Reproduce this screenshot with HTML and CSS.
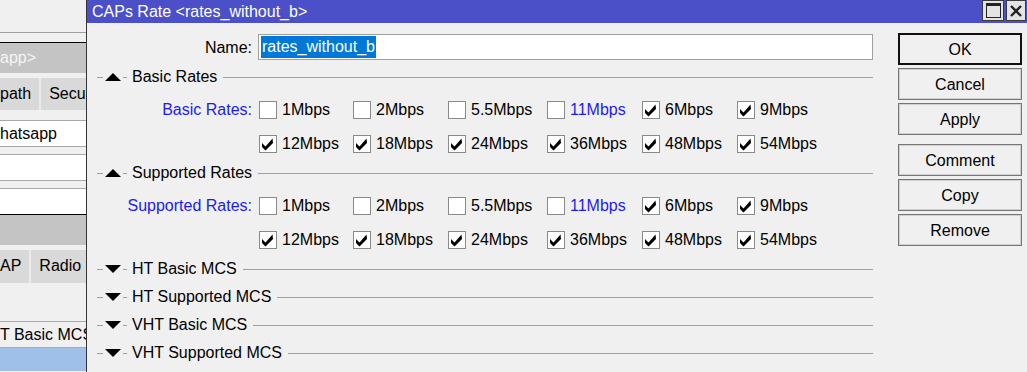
FILE: index.html
```html
<!DOCTYPE html>
<html lang="en">
<head>
    <meta charset="UTF-8">
    <title>CAPs Rate</title>
    <link rel="stylesheet" href="styles.css">
</head>
<body>
    <div class="desk">
        <div class="backwin">
            <div class="bw-top"></div>
            <div class="bw-frame first">
                <div class="bw-caption">app&gt;</div>
                <div class="bw-tabs">
                    <span class="bw-tab lead">path</span>
                    <span class="bw-tab">Secur</span>
                </div>
                <div class="bw-field first">hatsapp</div>
                <div class="bw-field"></div>
                <div class="bw-field last"></div>
            </div>
            <div class="bw-frame">
                <div class="bw-caption"></div>
                <div class="bw-tabs tall">
                    <span class="bw-tab lead">AP</span>
                    <span class="bw-tab">Radio</span>
                    <span class="bw-tab"></span>
                </div>
                <div class="bw-row">T Basic MCS</div>
                <div class="bw-row selected"></div>
            </div>
        </div>

        <div class="dialog">
            <div class="titlebar">
                <span class="title">CAPs Rate &lt;rates_without_b&gt;</span>
                <span class="tb-btn max">
                    <svg width="15" height="15" viewBox="0 0 15 15"><rect x="0.5" y="0.5" width="14" height="14" fill="none" stroke="#222"/><rect x="0" y="0" width="15" height="3" fill="#222"/></svg>
                </span>
                <span class="tb-btn close">
                    <svg width="12" height="12" viewBox="0 0 12 12"><path d="M1 1L11 11M11 1L1 11" stroke="#222" stroke-width="2.4"/></svg>
                </span>
            </div>

            <div class="dlg-body">
                <div class="form">
                    <div class="name-row">
                        <label class="lbl" for="name">Name:</label>
                        <div class="input" id="name"><span class="sel">rates_without_b</span></div>
                    </div>

                    <div class="group top">
                        <span class="dash"></span>
                        <svg class="tri" width="16" height="8" viewBox="0 0 16 8"><polygon points="0,8 8,0 16,8" fill="#000"/></svg>
                        <span class="dash short"></span>
                        <span class="group-title">Basic Rates</span>
                        <span class="rule"></span>
                    </div>
                    <div class="rates">
                        <div class="lbl blue">Basic Rates:</div>
                        <div class="checks">
                            <span class="cb"><span class="box"></span>1Mbps</span>
                            <span class="cb"><span class="box"></span>2Mbps</span>
                            <span class="cb"><span class="box"></span>5.5Mbps</span>
                            <span class="cb blue"><span class="box"></span>11Mbps</span>
                            <span class="cb"><span class="box"><svg viewBox="0 0 18 18"><polygon points="3,8 6.5,11.5 13.5,3.5 14,8 6.5,15.5 3,12"/></svg></span>6Mbps</span>
                            <span class="cb"><span class="box"><svg viewBox="0 0 18 18"><polygon points="3,8 6.5,11.5 13.5,3.5 14,8 6.5,15.5 3,12"/></svg></span>9Mbps</span>
                            <span class="cb"><span class="box"><svg viewBox="0 0 18 18"><polygon points="3,8 6.5,11.5 13.5,3.5 14,8 6.5,15.5 3,12"/></svg></span>12Mbps</span>
                            <span class="cb"><span class="box"><svg viewBox="0 0 18 18"><polygon points="3,8 6.5,11.5 13.5,3.5 14,8 6.5,15.5 3,12"/></svg></span>18Mbps</span>
                            <span class="cb"><span class="box"><svg viewBox="0 0 18 18"><polygon points="3,8 6.5,11.5 13.5,3.5 14,8 6.5,15.5 3,12"/></svg></span>24Mbps</span>
                            <span class="cb"><span class="box"><svg viewBox="0 0 18 18"><polygon points="3,8 6.5,11.5 13.5,3.5 14,8 6.5,15.5 3,12"/></svg></span>36Mbps</span>
                            <span class="cb"><span class="box"><svg viewBox="0 0 18 18"><polygon points="3,8 6.5,11.5 13.5,3.5 14,8 6.5,15.5 3,12"/></svg></span>48Mbps</span>
                            <span class="cb"><span class="box"><svg viewBox="0 0 18 18"><polygon points="3,8 6.5,11.5 13.5,3.5 14,8 6.5,15.5 3,12"/></svg></span>54Mbps</span>
                        </div>
                    </div>

                    <div class="group">
                        <span class="dash"></span>
                        <svg class="tri" width="16" height="8" viewBox="0 0 16 8"><polygon points="0,8 8,0 16,8" fill="#000"/></svg>
                        <span class="dash short"></span>
                        <span class="group-title">Supported Rates</span>
                        <span class="rule"></span>
                    </div>
                    <div class="rates">
                        <div class="lbl blue">Supported Rates:</div>
                        <div class="checks">
                            <span class="cb"><span class="box"></span>1Mbps</span>
                            <span class="cb"><span class="box"></span>2Mbps</span>
                            <span class="cb"><span class="box"></span>5.5Mbps</span>
                            <span class="cb blue"><span class="box"></span>11Mbps</span>
                            <span class="cb"><span class="box"><svg viewBox="0 0 18 18"><polygon points="3,8 6.5,11.5 13.5,3.5 14,8 6.5,15.5 3,12"/></svg></span>6Mbps</span>
                            <span class="cb"><span class="box"><svg viewBox="0 0 18 18"><polygon points="3,8 6.5,11.5 13.5,3.5 14,8 6.5,15.5 3,12"/></svg></span>9Mbps</span>
                            <span class="cb"><span class="box"><svg viewBox="0 0 18 18"><polygon points="3,8 6.5,11.5 13.5,3.5 14,8 6.5,15.5 3,12"/></svg></span>12Mbps</span>
                            <span class="cb"><span class="box"><svg viewBox="0 0 18 18"><polygon points="3,8 6.5,11.5 13.5,3.5 14,8 6.5,15.5 3,12"/></svg></span>18Mbps</span>
                            <span class="cb"><span class="box"><svg viewBox="0 0 18 18"><polygon points="3,8 6.5,11.5 13.5,3.5 14,8 6.5,15.5 3,12"/></svg></span>24Mbps</span>
                            <span class="cb"><span class="box"><svg viewBox="0 0 18 18"><polygon points="3,8 6.5,11.5 13.5,3.5 14,8 6.5,15.5 3,12"/></svg></span>36Mbps</span>
                            <span class="cb"><span class="box"><svg viewBox="0 0 18 18"><polygon points="3,8 6.5,11.5 13.5,3.5 14,8 6.5,15.5 3,12"/></svg></span>48Mbps</span>
                            <span class="cb"><span class="box"><svg viewBox="0 0 18 18"><polygon points="3,8 6.5,11.5 13.5,3.5 14,8 6.5,15.5 3,12"/></svg></span>54Mbps</span>
                        </div>
                    </div>

                    <div class="group">
                        <span class="dash"></span>
                        <svg class="tri" width="16" height="8" viewBox="0 0 16 8"><polygon points="0,0 16,0 8,8" fill="#000"/></svg>
                        <span class="dash short"></span>
                        <span class="group-title">HT Basic MCS</span>
                        <span class="rule"></span>
                    </div>
                    <div class="group">
                        <span class="dash"></span>
                        <svg class="tri" width="16" height="8" viewBox="0 0 16 8"><polygon points="0,0 16,0 8,8" fill="#000"/></svg>
                        <span class="dash short"></span>
                        <span class="group-title">HT Supported MCS</span>
                        <span class="rule"></span>
                    </div>
                    <div class="group">
                        <span class="dash"></span>
                        <svg class="tri" width="16" height="8" viewBox="0 0 16 8"><polygon points="0,0 16,0 8,8" fill="#000"/></svg>
                        <span class="dash short"></span>
                        <span class="group-title">VHT Basic MCS</span>
                        <span class="rule"></span>
                    </div>
                    <div class="group">
                        <span class="dash"></span>
                        <svg class="tri" width="16" height="8" viewBox="0 0 16 8"><polygon points="0,0 16,0 8,8" fill="#000"/></svg>
                        <span class="dash short"></span>
                        <span class="group-title">VHT Supported MCS</span>
                        <span class="rule"></span>
                    </div>
                </div>

                <div class="buttons">
                    <button class="btn default">OK</button>
                    <button class="btn">Cancel</button>
                    <button class="btn">Apply</button>
                    <button class="btn spaced">Comment</button>
                    <button class="btn">Copy</button>
                    <button class="btn">Remove</button>
                </div>
            </div>
        </div>
    </div>
</body>
</html>
```

FILE: styles.css
```css
* {
    box-sizing: border-box;
}

body {
    margin: 0;
    font-family: "Liberation Sans", Arial, sans-serif;
    font-size: 16px;
    color: #000;
    background-color: #f0f0f0;
}

.desk {
    display: flex;
    width: 1027px;
    height: 372px;
    overflow: hidden;
}

/* window behind the dialog */
.backwin {
    width: 86px;
    flex: none;
    overflow: hidden;
    white-space: nowrap;
    background-color: #f0f0f0;
}

.bw-top {
    height: 33px;
    border-bottom: 1px solid #a0a0a0;
}

.bw-frame {
    border-top: 1px solid #000;
}

.bw-frame.first {
    margin-top: 9px;
}

.bw-caption {
    height: 30px;
    line-height: 30px;
    background-color: #c4c4c4;
    color: #f4f4f4;
}

.bw-tabs {
    display: flex;
    height: 32px;
    margin-top: 5px;
    background-color: #d9d9d9;
}

.bw-tabs.tall {
    height: 33px;
}

.bw-tab {
    padding: 0 8px;
    line-height: 32px;
    border-right: 2px solid #ebebeb;
}

.bw-tab.lead {
    padding-left: 0;
}

.bw-field {
    height: 27px;
    margin-top: 7px;
    line-height: 25px;
    background-color: #fff;
    border-top: 1px solid #a9a9a9;
    border-bottom: 1px solid #a9a9a9;
}

.bw-field.first {
    margin-top: 10px;
}

.bw-field.last {
    height: 26px;
    border-bottom: none;
}

.bw-row {
    height: 27px;
    margin-top: 38px;
    line-height: 25px;
    border-top: 1px solid #a9a9a9;
    border-bottom: 1px solid #a9a9a9;
}

.bw-row.selected {
    height: 23px;
    margin-top: 0;
    border: none;
    background-color: #9fc0e8;
}

/* dialog */
.dialog {
    width: 941px;
    flex: none;
    border-left: 1px solid #333;
    background-color: #f0f0f0;
}

.titlebar {
    display: flex;
    align-items: flex-start;
    height: 23px;
    background-color: #4b50c9;
    color: #fff;
}

.title {
    padding-left: 5px;
    line-height: 23px;
}

.tb-btn {
    display: flex;
    justify-content: center;
    align-items: center;
    height: 21px;
    background-color: #e3e3e3;
    border: 1px solid #3a3a3a;
}

.tb-btn.max {
    width: 22px;
    margin-left: auto;
}

.tb-btn.close {
    width: 20px;
    margin-left: 2px;
    margin-right: 1px;
}

.dlg-body {
    display: flex;
}

.form {
    width: 786px;
    padding-top: 11px;
}

.name-row {
    display: flex;
    align-items: center;
    height: 26px;
    padding-top: 1px;
}

.lbl {
    width: 165px;
    margin-right: 6px;
    text-align: right;
    flex: none;
}

.blue {
    color: #1c1cf2;
}

.input {
    flex: 1;
    height: 26px;
    margin-top: -1px;
    padding: 1px 2px;
    background-color: #fff;
    border: 1px solid #a0a0a0;
}

.sel {
    display: inline-block;
    height: 22px;
    line-height: 22px;
    padding: 0 1px;
    background-color: #0078d7;
    color: #fff;
}

.group {
    display: flex;
    align-items: center;
    height: 28px;
    padding-left: 10px;
}

.group.top {
    margin-top: 3px;
}

.dash {
    width: 6px;
    height: 1px;
    background-color: #a0a0a0;
    margin-right: 1px;
}

.dash.short {
    width: 4px;
    margin-left: 2px;
    margin-right: 5px;
}

.tri {
    flex: none;
    margin-left: 1px;
}

.group-title {
    margin-right: 6px;
}

.rule {
    flex: 1;
    height: 1px;
    background-color: #a0a0a0;
}

.rates {
    display: flex;
}

.rates .lbl {
    height: 34px;
    line-height: 34px;
    padding-top: 2px;
}

.checks {
    display: grid;
    grid-template-columns: 94px 95px 99px 95px 95px auto;
    grid-auto-rows: 34px;
    padding-left: 1px;
}

.cb {
    display: flex;
    align-items: center;
    padding-top: 3px;
    white-space: nowrap;
}

.box {
    display: inline-block;
    width: 18px;
    height: 18px;
    margin-right: 5px;
    background-color: #fff;
    border: 1px solid #8a8a8a;
}

.box svg {
    display: block;
    width: 18px;
    height: 18px;
    margin: -1px;
    fill: #000;
}

.buttons {
    display: flex;
    flex-direction: column;
    gap: 3px;
    width: 124px;
    margin-left: 25px;
    padding-top: 10px;
}

.btn {
    height: 32px;
    padding: 0;
    padding-top: 2px;
    font-family: inherit;
    font-size: 16px;
    color: #000;
    background-color: #f0f0f0;
    border: 1px solid #767676;
    box-shadow: inset 0 0 0 1px #d0d0d0;
}

.btn.default {
    border: 2px solid #111;
    box-shadow: none;
}

.btn.spaced {
    margin-top: 6px;
}
```
